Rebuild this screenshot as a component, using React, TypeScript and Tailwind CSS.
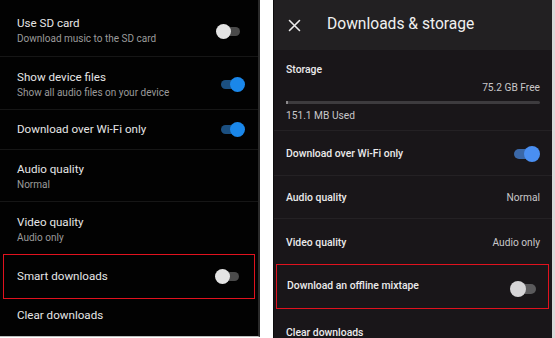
import React from "react";

function Toggle({ on, variant }: { on: boolean; variant: "l" | "r" }) {
  if (variant === "l") {
    return (
      <div className="relative w-[29px] h-[15px] shrink-0">
        <div className={`absolute left-[5px] top-[3px] w-[19px] h-[9px] rounded-full ${on ? "bg-[#1b4f80]" : "bg-[#4a4a4a]"}`} />
        <div className={`absolute top-0 w-[15px] h-[15px] rounded-full ${on ? "right-0 bg-[#1a87ea]" : "left-0 bg-[#e4e4e4]"}`} />
      </div>
    );
  }
  return (
    <div className="relative w-[29px] h-[16px] shrink-0">
      <div className={`absolute left-[3px] top-[3px] w-[23px] h-[10px] rounded-full ${on ? "bg-[#3b68a8]" : "bg-[#5b5a5c]"}`} />
      <div className={`absolute top-0 w-[16px] h-[16px] rounded-full ${on ? "right-0 bg-[#4a8ff2]" : "left-0 bg-[#d6d5d7]"}`} />
    </div>
  );
}

function LRow({ title, sub, toggle, h, border = true }: { title: string; sub?: string; toggle?: boolean; h: string; border?: boolean }) {
  return (
    <div className={`flex items-center justify-between pl-[17px] pr-[13px] shrink-0 ${h} ${border ? "border-b border-[#161616]" : ""}`}>
      <div className="flex flex-col">
        <div className="text-[11.6px] leading-[15px] text-[#e6e6e6]">{title}</div>
        {sub && <div className="text-[10px] leading-[15px] text-[#9b9b9b]">{sub}</div>}
      </div>
      {toggle !== undefined && <Toggle on={toggle} variant="l" />}
    </div>
  );
}

function RRow({ title, value, toggle, h, border = true }: { title: string; value?: string; toggle?: boolean; h: string; border?: boolean }) {
  return (
    <div className={`flex items-center justify-between pl-[12px] pr-[12px] shrink-0 ${h} ${border ? "border-b border-[#242124]" : ""}`}>
      <div className="text-[10.4px] font-medium text-[#ebeaeb]">{title}</div>
      {value && <div className="text-[10.2px] text-[#c9c8ca]">{value}</div>}
      {toggle !== undefined && <Toggle on={toggle} variant="r" />}
    </div>
  );
}

export default function App() {
  return (
    <div className="w-[555px] h-[338px] bg-white flex overflow-hidden" style={{ fontFamily: "Roboto, 'Liberation Sans', sans-serif" }}>
      {/* Left panel */}
      <div className="w-[260px] h-[337px] bg-[#020202] border-r-2 border-[#2a2a2a] border-b border-b-[#bdbdbd] flex flex-col shrink-0">
        <LRow title="Use SD card" sub="Download music to the SD card" toggle={false} h="h-[57px] pt-[6px]" />
        <LRow title="Show device files" sub="Show all audio files on your device" toggle={true} h="h-[53px] pt-[3px]" />
        <LRow title="Download over Wi-Fi only" toggle={true} h="h-[40px]" />
        <LRow title="Audio quality" sub="Normal" h="h-[52px] pt-[3px]" />
        <LRow title="Video quality" sub="Audio only" h="h-[52px] pt-[3px]" border={false} />
        <div className="mx-[3px] h-[45px] border border-[#e0121e] flex items-center justify-between pl-[13px] pr-[10px] shrink-0">
          <div className="text-[11.6px] text-[#e6e6e6]">Smart downloads</div>
          <Toggle on={false} variant="l" />
        </div>
        <div className="flex-1 flex items-center pl-[17px] pb-[4px]">
          <div className="text-[11.6px] text-[#e6e6e6]">Clear downloads</div>
        </div>
      </div>

      {/* Gap */}
      <div className="w-[13px] shrink-0" />

      {/* Right panel */}
      <div className="w-[279px] h-[338px] bg-[#191619] border-l border-[#0d0c0d] flex flex-col shrink-0 overflow-hidden">
        <div className="h-[50px] bg-[#222022] flex items-center shrink-0">
          <svg width="13" height="13" viewBox="0 0 13 13" className="ml-[14px]">
            <path d="M1.5 1.5 L11.5 11.5 M11.5 1.5 L1.5 11.5" stroke="#ececec" strokeWidth="1.6" strokeLinecap="round" />
          </svg>
          <div className="ml-[26px] text-[15.6px] text-[#f0f0f0]">Downloads &amp; storage</div>
        </div>
        <div className="h-[81px] border-b border-[#242124] px-[12px] pt-[13px] flex flex-col shrink-0">
          <div className="text-[10.4px] font-medium text-[#ebeaeb] leading-[14px]">Storage</div>
          <div className="text-[10.2px] text-[#c9c8ca] text-right leading-[14px] mt-[4px]">75.2 GB Free</div>
          <div className="mt-[6px] h-[3px] bg-[#3d3b3e] rounded-full">
            <div className="h-full w-[2px] bg-[#8a888b]" />
          </div>
          <div className="text-[10.2px] text-[#c9c8ca] leading-[14px] mt-[5px]">151.1 MB Used</div>
        </div>
        <RRow title="Download over Wi-Fi only" toggle={true} h="h-[45px] pt-[2px]" />
        <RRow title="Audio quality" value="Normal" h="h-[43px] pt-[2px]" />
        <RRow title="Video quality" value="Audio only" h="h-[45px] pt-[3px]" border={false} />
        <div className="ml-[2px] mr-[3px] h-[45px] border border-[#e0121e] flex justify-between pl-[10px] pr-[9px] shrink-0">
          <div className="text-[10.4px] font-medium text-[#ebeaeb] mt-[13px]">Download an offline mixtape</div>
          <div className="mt-[16px]"><Toggle on={false} variant="r" /></div>
        </div>
        <div className="pl-[12px] pt-[16px] shrink-0">
          <div className="text-[10.4px] font-medium text-[#ebeaeb]">Clear downloads</div>
        </div>
      </div>
      <div className="flex-1 bg-[#d9d9d9]" />
    </div>
  );
}
